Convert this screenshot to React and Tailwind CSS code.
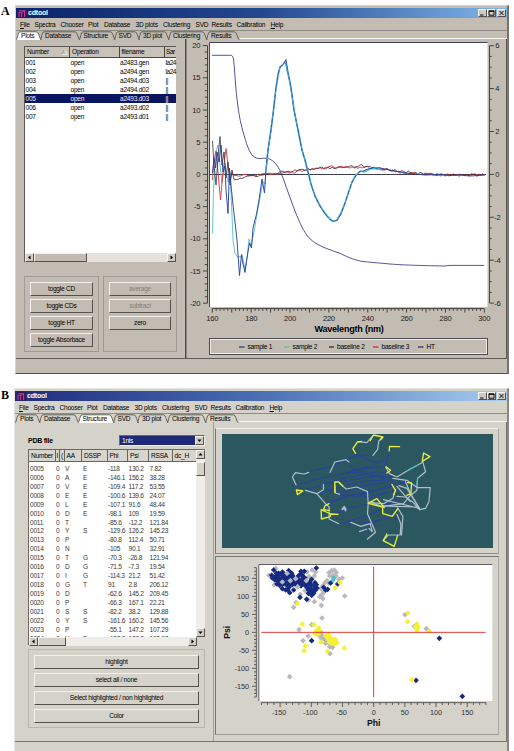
import clsx from 'clsx';

const menus = [
  ['File', 'w-[14.5px]', true],
  ['Spectra', 'w-[26px]'],
  ['Chooser', 'w-[27.5px]'],
  ['Plot', 'w-[16px]'],
  ['Database', 'w-[31.5px]'],
  ['3D plots', 'w-[27.5px]'],
  ['Clustering', 'w-[32.5px]'],
  ['SVD', 'w-[16px]'],
  ['Results', 'w-[25px]'],
  ['Calibration', 'w-[34px]'],
  ['Help', 'w-[14px]', true],
];

const tabs = [
  ['Plots', 24, 'w-[24px]'],
  ['Database', 38.5, 'w-[38.5px]'],
  ['Structure', 35, 'w-[35px]'],
  ['SVD', 24.5, 'w-[24.5px]'],
  ['3D plot', 30, 'w-[30px]'],
  ['Clustering', 38, 'w-[38px]'],
  ['Results', 32, 'w-[32px]'],
];

const files = [
  ['001', 'open', 'a2483.gen', 'la24'],
  ['002', 'open', 'a2494.gen', 'la24'],
  ['003', 'open', 'a2494.d03', '||'],
  ['004', 'open', 'a2494.d02', '||'],
  ['005', 'open', 'a2493.d03', '||'],
  ['006', 'open', 'a2493.d02', '||'],
  ['007', 'open', 'a2493.d01', '||'],
];

const residues = [
  ['0005', 'V', 'E', '-118', '130.2', '7.82'],
  ['0006', 'A', 'E', '-146.1', '156.2', '38.28'],
  ['0007', 'V', 'E', '-109.4', '117.2', '53.55'],
  ['0008', 'E', 'E', '-100.6', '139.6', '24.07'],
  ['0009', 'L', 'E', '-107.1', '91.6', '48.44'],
  ['0010', 'D', 'E', '-98.1', '109', '19.59'],
  ['0011', 'T', '', '-85.6', '-12.2', '121.84'],
  ['0012', 'Y', 'S', '-129.6', '126.2', '145.23'],
  ['0013', 'P', '', '-80.8', '112.4', '50.71'],
  ['0014', 'N', '', '-105', '90.1', '32.91'],
  ['0015', 'T', 'G', '-70.3', '-26.8', '121.94'],
  ['0016', 'D', 'G', '-71.5', '-7.3', '19.54'],
  ['0017', 'I', 'G', '-114.3', '21.2', '51.42'],
  ['0018', 'G', 'T', '91', '2.8', '206.12'],
  ['0019', 'D', '', '-62.6', '145.2', '209.45'],
  ['0020', 'P', '', '-66.3', '167.1', '22.21'],
  ['0021', 'S', 'S', '-82.2', '38.2', '129.88'],
  ['0022', 'Y', 'S', '-161.6', '160.2', '145.56'],
  ['0023', 'P', '', '-55.1', '147.2', '107.29'],
  ['0024', 'V', 'E', '-127.3', '137.8', '102.07'],
];

const range = (from, to, step) => {
  const out = [];
  for (let v = from; v <= to + 1e-6; v += step) out.push(v);
  return out;
};

// small deterministic noise source
const random = (seed) => () => {
  seed = (seed * 16807) % 2147483647;
  return seed / 2147483647;
};

// baseline drawn through anchors with a bit of jitter
function noisy(head, anchors, seed, amp) {
  const rnd = random(seed);
  const pts = head.map((p) => p.join(','));
  for (let i = 0; i < anchors.length - 1; i++) {
    const [x0, y0] = anchors[i];
    const [x1, y1] = anchors[i + 1];
    for (let x = x0; x < x1; x += 2) {
      const y = y0 + ((y1 - y0) * (x - x0)) / (x1 - x0);
      pts.push(`${x},${(y + (rnd() - 0.5) * amp).toFixed(1)}`);
    }
  }
  return pts.join(' ');
}

const black = noisy(
  [[212.5, 141], [214, 165], [216, 185], [218, 158], [220, 136.5], [222, 165], [224, 152], [226, 178], [228, 162], [230, 185], [232, 170]],
  [[234, 181], [240, 178], [262, 174.5], [285, 172], [310, 169], [330, 167.5], [362, 166], [375, 168], [400, 171], [425, 174], [455, 175.5], [485, 175]],
  71, 2.8,
);
const red = noisy(
  [[212.5, 180], [214, 160], [216, 151], [218, 172], [220.5, 200], [223, 172], [226, 148.5], [228, 165], [230, 180], [232, 173]],
  [[234, 177], [240, 176], [262, 174.5], [290, 173], [310, 169], [330, 167], [350, 167], [375, 168], [400, 172], [425, 174.5], [455, 174.5], [485, 175]],
  23, 2.6,
);

const sample1 =
  '212.5,173 214,158 215.5,168 217,152 219,162 221,145 223,172 225,166 226,190 228,213.5 229.5,168 231,185 233,205 235,222 237,240 239.5,275.5 241.5,254.5 243,264 245,272.5 247,258 249.5,243 251.5,248 253,228 256.5,214 259,200 262,179 264.5,193 266,168 268,150 271,130 273.5,110 276,88 278,75 280,67 283,64.5 286,59.5 288,72 291,88 294,110 298,130 302,150 305,160 308,172 311,184 315,196 320,206 325,214 329,218.5 333,221.3 337,220.5 341,214 345,203 348,194 352,182 356,175.5 359,172 363,171 368,169 373,168 380,168 390,170 400,172 410,173.5 425,175 440,174.5 450,175.5 460,175 470,176 485,175';
// sample 2 runs apart from sample 1 only at the short wavelengths
const sample2Head =
  '212.5,233 213.5,190 216,152 218,145 220,165 222,183 225,163 228,182 230,172 232,215 233,240 235,253 237,256.5 241,257 242,255 245,269 247,258 249,239 251,246 254,232 257,214 260,198 263,182 265,184 266.5,166';
const sample2Tail =
  '266.5,166 268,150 271,130 273.5,110 276,88 278,75 280,67 283,64.5 285.5,62 287.5,72 289,78 291,88 294,110 298,130 302,150 305,160 308,172 311,184 315,196 320,206 325,213 329,218 333,221.5 337,220 341,213 345,203 348,194 352,182 356,175 360,171 364,172 370,169 380,168';
const ht =
  'M212 55.3H231.5C233.5 56 234 62 234.5 70C236 92 238 112 241.5 126C245 139 248 150 252 155C255 158 258 158.9 261 158.6C265 157.8 270 158 274 162C280 167 284 181 288 192C293 206 297 217 302 227C306 235 310 240 317 244C324 248 332 250.5 339 253C346 256 352 259.5 362 261.4C374 262.7 382 263.2 390 264C402 265 418 265.5 444 266L450 265.4H484';

const legend = [
  ['sample 1', '#1d2c86', 'w-[45px]'],
  ['sample 2', '#55c2a8', 'w-[44.5px]'],
  ['baseline 2', '#2c1c34', 'w-[44.5px]'],
  ['baseline 3', '#cc2424', 'w-[45px]'],
  ['HT', '#1e2a70', 'w-[20px]'],
];

function Logo() {
  return (
    <svg viewBox="0 0 10 9" className="h-[9px] w-[10px] shrink-0">
      <rect width="9" height="8.5" fill="#3b1450" />
      <path d="M1 8V3.2H3.6V8M3.6 3.2L6.6 1.6V8" fill="none" stroke="#c03f96" strokeWidth="1.1" />
      <path d="M1 1.6H6.6" stroke="#7d3fb4" />
    </svg>
  );
}

function TitleButton({ children }) {
  return (
    <span className="flex h-[8px] w-[9px] items-center justify-center border border-t-[#f4f2ee] border-r-[#56524e] border-b-[#56524e] border-l-[#f4f2ee] bg-[#d0ccc4]">
      <svg viewBox="0 0 7 6" className="h-[6px] w-[7px] shrink-0" fill="none" stroke="#111" strokeWidth="1">
        {children}
      </svg>
    </span>
  );
}

function TitleBar({ className }) {
  return (
    <div className={clsx('flex h-[10px] shrink-0 items-center bg-linear-to-r pr-[1px] pl-[2px]', className)}>
      <Logo />
      <span className="text-[7px] leading-[10px] font-bold tracking-[-0.2px] text-white">cdtool</span>
      <div className="ml-auto flex">
        <TitleButton>
          <path d="M1 5H4.5" />
        </TitleButton>
        <TitleButton>
          <path d="M1 .8H6V5.2H1ZM1 1.4H6" />
        </TitleButton>
        <span className="w-[1.5px]" />
        <TitleButton>
          <path d="M1.5 1L5.5 5M5.5 1L1.5 5" />
        </TitleButton>
      </div>
    </div>
  );
}

function MenuBar() {
  return (
    <div className="flex h-[12px] shrink-0 items-center pl-[4px]">
      {menus.map(([name, width, key]) => (
        <span key={name} className={clsx('shrink-0 whitespace-nowrap', width)}>
          {key ? <u className="underline-offset-1">{name[0]}</u> : name[0]}
          {name.slice(1)}
        </span>
      ))}
    </div>
  );
}

function TabBar({ active }) {
  return (
    <div className="flex h-[9px] shrink-0 border-t border-[#8f8b85]">
      {tabs.map(([name, w, width]) => (
        <div key={name} className={clsx('relative shrink-0', width)}>
          <svg viewBox={`0 0 ${w + 3} 9`} width={w + 3} height="9" className="absolute top-0 left-0">
            <path
              d={`M0 9C1.5 8 1.8 1 3.8 .8H${w - 3.5}C${w - 1} 1 ${w - 0.5} 8 ${w + 1.5} 9`}
              fill={name === active ? '#fff' : 'none'}
              stroke="#55514d"
              strokeWidth=".9"
            />
          </svg>
          <span className="relative block pl-[5px] leading-[9px] whitespace-nowrap">{name}</span>
        </div>
      ))}
      <div className="ml-[2px] flex-1 self-end border-b border-[#f6f4f0]" />
    </div>
  );
}

function Arrow({ d }) {
  return (
    <span className="flex h-[9px] w-[9px] shrink-0 items-center justify-center border border-t-[#f6f4f0] border-r-[#55514d] border-b-[#55514d] border-l-[#f6f4f0] bg-[#d2cec6]">
      <svg viewBox="0 0 5 5" className="h-[5px] w-[5px] shrink-0">
        <path d={d} fill="#000" />
      </svg>
    </span>
  );
}

const LEFT = 'M3.5 .5V4.5L1 2.5Z';
const RIGHT = 'M1.5 .5V4.5L4 2.5Z';
const UP = 'M.5 3.5H4.5L2.5 1Z';
const DOWN = 'M.5 1.5H4.5L2.5 4Z';

function Button({ children, disabled, className }) {
  return (
    <button
      className={clsx(
        'block h-[14px] w-full shrink-0 border border-t-[#f4f2ee] border-r-[#55514d] border-b-[#55514d] border-l-[#f4f2ee] text-center leading-[12px]',
        disabled && 'text-[#857f78]',
        className,
      )}
    >
      {children}
    </button>
  );
}

function FileTable() {
  const cols = ['w-[45px]', 'w-[49.5px]', 'w-[45.5px]', 'w-[11px] tracking-[-0.5px]'];
  return (
    <div className="flex h-[216px] w-[152px] flex-col border-t border-l border-[#5c5854] bg-white">
      <div className="flex h-[11px] shrink-0 bg-[#c9c2b8]">
        {['Number', 'Operation', 'filename', 'Sar'].map((h, i) => (
          <div
            key={h}
            className={clsx(
              'flex shrink-0 items-center border-b border-[#4a4642] leading-[10px] whitespace-nowrap',
              i < 3 ? 'border-r pl-[2px]' : 'pl-[1px]',
              cols[i],
            )}
          >
            {h}
            {i === 0 && (
              <svg viewBox="0 0 7 6" className="ml-auto h-[6px] w-[9px]" fill="none" stroke="#8d8780" strokeWidth=".7">
                <path d="M.5 5.5L3.5 .5" />
                <path d="M3.5 .5L6.5 5.5H.5" stroke="#f4f2ee" />
              </svg>
            )}
          </div>
        ))}
      </div>
      <div className="flex flex-1 flex-col">
        {files.map((row, n) => (
          <div key={row[0]} className={clsx('flex h-[8.95px] leading-[9px]', n === 4 && 'bg-[#0a1560] text-[#e8e8f4]')}>
            {row.map((cell, i) => (
              <span key={i} className={clsx('shrink-0 pl-[0.5px] whitespace-nowrap', cols[i])}>
                {cell}
              </span>
            ))}
          </div>
        ))}
      </div>
      <div className="flex h-[9px] shrink-0 bg-[#e6e3df]">
        <Arrow d={LEFT} />
        <span className="w-[53px] border border-t-[#f4f2ee] border-r-[#55514d] border-b-[#55514d] border-l-[#f4f2ee] bg-[#c4bcb2]" />
        <span className="flex-1" />
        <Arrow d={RIGHT} />
      </div>
    </div>
  );
}

function SpectrumPlot() {
  const yL = (v) => 174.4 - v * 6.44;
  const yR = (v) => 174.4 - v * 21.45;
  const x = (v) => 212.3 + (v - 160) * 1.943;
  return (
    <svg viewBox="189 40 318 296" className="block h-[296px] w-[318px]" fontSize="7.6" fill="#222">
      <rect x="209.5" y="42.5" width="278" height="264.5" fill="#fff" />
      <path d="M209.5 307V42.5H487.5" fill="none" stroke="#45435c" />
      <g stroke="#3a3733" strokeWidth=".9" fill="none">
        <path d="M207.5 45.7V303" />
        {range(-20, 20, 1).map((v) => (
          <path key={v} d={`M${v % 5 ? 204.8 : 203} ${yL(v)}H207.5`} />
        ))}
        <path d="M489.5 45.7V303" />
        {range(-6, 6, 0.5).map((v) => (
          <path key={v} d={`M489.5 ${yR(v)}H${v % 2 ? 491.7 : 494}`} />
        ))}
        <path d="M212.3 308.6H484.3" />
        {range(160, 300, 2).map((v) => (
          <path key={v} d={`M${x(v)} 308.6V${v % 10 ? 310.8 : 312.6}`} />
        ))}
      </g>
      {range(-20, 20, 5).map((v) => (
        <text key={v} x="200.3" y={yL(v) + 2.6} textAnchor="end">
          {v}
        </text>
      ))}
      {range(-6, 6, 2).map((v) => (
        <text key={v} x={v < 0 ? 494.3 : 495.2} y={yR(v) + 2.6}>
          {v}
        </text>
      ))}
      {range(160, 300, 20).map((v) => (
        <text key={v} x={x(v)} y="320.8" textAnchor="middle">
          {v}
        </text>
      ))}
      <text x="349" y="331.8" textAnchor="middle" fontSize="9.1" fontWeight="bold" fill="#000">
        Wavelength (nm)
      </text>
      <g fill="none" strokeLinejoin="round">
        <path d="M210 174.5H486" stroke="#2b2838" strokeWidth=".9" />
        <polyline points={sample2Head} stroke="#55bfc4" strokeWidth=".9" />
        <polyline points={red} stroke="#d8343a" strokeWidth=".9" />
        <polyline points={black} stroke="#3b2f3c" strokeWidth=".8" />
        <path d={ht} stroke="#443f8c" strokeWidth=".9" />
        <polyline points={sample2Tail} stroke="#58bfe0" strokeWidth="1.7" />
        <polyline points={sample1} stroke="#2a4499" strokeWidth=".95" />
        <polyline points={sample2Tail} stroke="#46aed8" strokeWidth="1" strokeDasharray="3 3" />
      </g>
    </svg>
  );
}

function PlotsWindow() {
  return (
    <div className="flex h-[369px] w-[494px] flex-col border-t border-r-2 border-b border-l border-t-[#d6d2cc] border-r-[#77736f] border-b-[#55514d] border-l-[#d6d2cc] bg-[#c3bcb2] pt-[2px]">
      <TitleBar className="from-[#0a246a] via-[#24478f] to-[#82b8ea]" />
      <MenuBar />
      <TabBar active="Plots" />
      <div className="flex h-[320px] shrink-0 border-r border-b border-[#5f5b57]">
        <div className="w-[170px] shrink-0 border-r border-[#4f4b48] pt-[7px] pl-[8px]">
          <FileTable />
          <div className="mt-[14px] flex gap-[4px]">
            <div className="flex h-[76px] w-[75px] flex-col gap-[3px] border border-[#a19b93] px-[5px] pt-[5px]">
              <Button>toggle CD</Button>
              <Button>toggle CDs</Button>
              <Button>toggle HT</Button>
              <Button>toggle Absorbace</Button>
            </div>
            <div className="flex h-[76px] w-[74px] flex-col gap-[3px] border border-[#a19b93] px-[5px] pt-[5px]">
              <Button disabled>average</Button>
              <Button disabled>subtract</Button>
              <Button>zero</Button>
            </div>
          </div>
        </div>
        <div className="flex-1 border-l border-[#8a867f] pt-[1px] pl-[2px]">
          <SpectrumPlot />
          <div className="mt-[2px] ml-[20px] flex h-[17px] w-[279px] items-center border border-[#4e4c58] pl-[29px] shadow-[inset_1px_1px_0_#efece8,inset_-1px_-1px_0_#efece8]">
            {legend.map(([name, color, width]) => (
              <span key={name} className={clsx('flex shrink-0 items-center gap-[3px] whitespace-nowrap', width)}>
                <svg width="5.5" height="2" className="shrink-0">
                  <path d="M0 1H5.5" stroke={color} strokeWidth="1.2" />
                </svg>
                {name}
              </span>
            ))}
          </div>
        </div>
      </div>
    </div>
  );
}

function ResidueTable() {
  const cols = ['w-[26.5px]', 'w-[4.5px]', 'w-[4.5px]', 'w-[17.5px]', 'w-[25.5px]', 'w-[20.5px]', 'w-[21px]', 'w-[23.5px]', 'w-[24px]'];
  const cells = ['w-[26px]', 'w-[9px]', 'w-[18px]', 'w-[25px]', 'w-[20.5px]', 'w-[21px]', 'w-[30px]'];
  return (
    <div className="flex h-[196px] w-[177px] flex-col border-t border-l border-[#6b6864] bg-white">
      <div className="flex h-[187px]">
        <div className="flex w-[168px] flex-col overflow-hidden">
          <div className="flex h-[12px] shrink-0 bg-[#d8d5cd]">
            {['Number', 'I', '(', 'AA', 'DSSP', 'Phi', 'Psi', 'RSSA', 'dc_H'].map((h, i) => (
              <div
                key={h}
                className={clsx(
                  'shrink-0 border-b border-[#66625e] leading-[11px] whitespace-nowrap',
                  i < 8 && 'border-r',
                  i === 1 || i === 2 ? 'pl-[1px]' : 'pl-[2px]',
                  cols[i],
                )}
              >
                {h}
              </div>
            ))}
          </div>
          <div className="pt-[2px] text-[#3a3836]">
            {residues.map(([no, aa, dssp, phi, psi, rssa]) => (
              <div key={no} className="flex h-[8.93px] pl-[1px] leading-[9px]">
                {[no, '0', aa, dssp, phi, psi, rssa].map((cell, i) => (
                  <span key={i} className={clsx('shrink-0 whitespace-nowrap', cells[i])}>
                    {cell}
                  </span>
                ))}
              </div>
            ))}
          </div>
        </div>
        <div className="flex w-[9px] shrink-0 flex-col bg-[#efedea]">
          <Arrow d={UP} />
          <span className="mt-[3px] h-[14px] border border-t-[#f6f4f0] border-r-[#55514d] border-b-[#55514d] border-l-[#f6f4f0] bg-[#d4d1c9]" />
          <span className="flex-1" />
          <Arrow d={DOWN} />
        </div>
      </div>
      <div className="flex h-[9px] shrink-0 bg-[#efedea]">
        <Arrow d={LEFT} />
        <span className="w-[28px] border border-t-[#f6f4f0] border-r-[#55514d] border-b-[#55514d] border-l-[#f6f4f0] bg-[#d4d1c9]" />
        <span className="flex-1" />
        <Arrow d={RIGHT} />
        <span className="w-[8px] bg-[#d4d1c9]" />
      </div>
    </div>
  );
}

function Molecule() {
  return (
    <svg viewBox="36 163 812 342" className="block h-[114px] w-[271px] bg-[#2b5761]" preserveAspectRatio="none" fill="none" strokeLinejoin="round" strokeLinecap="round">
      <g stroke="#2b419f" strokeWidth="3.2">
        <path d="M292 278L362 262L408 240L440 225L484 228" />
        <path d="M258 316L330 296L400 282L470 262L524 262" />
        <path d="M286 332L350 312L430 300L500 288L545 292" />
        <path d="M340 312L420 292L500 276L530 280" />
        <path d="M322 342L390 322L470 304L556 300" />
        <path d="M350 374L400 352L470 336L540 322L548 300" />
        <path d="M372 404L420 384L480 372L500 350L556 330" />
        <path d="M386 432L430 420L500 396L520 380L566 356" />
        <path d="M384 344L440 350L500 330L556 312L600 306" />
        <path d="M408 240L430 272L500 262M440 225L500 250L524 240" />
        <path d="M538 214L526 262M420 434L480 428L540 412L560 420" />
        <path d="M360 366L430 344L470 352L530 340M450 458L476 446L500 420" />
        <path d="M400 282L450 276L524 296M350 330L400 338L470 316L520 310" />
      </g>
      <g stroke="#b0bfcc" strokeWidth="3.6">
        <path d="M258 316L247 292L256 279L282 283L296 278" />
        <path d="M360 278L374 247L408 240L416 247" />
        <path d="M444 186L470 189L488 168M518 174L506 184L502 210L488 227" />
        <path d="M286 332L320 342L340 330V314M320 342L346 372L357 382V418L386 432" />
        <path d="M374 318L376 340L388 344M388 311L408 328L440 322L472 336L474 372L472 402L496 458L472 478" />
        <path d="M526 262L538 282L560 292L600 268L638 248L646 276L622 296L620 332L600 348L580 372L520 380" />
        <path d="M548 296L590 302L622 324H660L656 366L646 386L628 390L606 366L586 352L560 350" />
        <path d="M566 318L590 326L628 386L560 370L520 360M480 368L510 378L556 380L622 382" />
        <path d="M560 320L600 366M556 330L548 356L520 372L476 368M586 306L600 340L628 390" />
        <path d="M560 404L572 432L570 466H534L520 482M562 384L578 410L574 466" />
        <path d="M422 428L452 440L480 432L486 456L476 446" />
        <path d="M396 390L402 380L408 390L396 386M402 380L406 394" />
        <path d="M448 456L470 448" />
      </g>
      <path d="M592 273L622 257M622 296L620 314" stroke="#49b9c3" strokeWidth="3.6" />
      <g stroke="#e9ee3c" strokeWidth="4">
        <path d="M436 221L428 207L442 187M442 187L454 185M480 183L490 166L518 172L510 180" />
        <path d="M568 201L538 200L537 214M528 262L541 272L530 280" />
        <path d="M636 245L640 220L659 231L636 245" />
        <path d="M278 334L262 345L259 331L278 334" />
        <path d="M374 338V307H386L398 319" />
        <path d="M358 392L340 390L345 378L357 372M333 390L334 418L360 411L362 403L333 390M362 403L384 404" />
        <path d="M474 371L500 357L522 384L474 371M517 386L518 402L546 410L562 388" />
        <path d="M545 314L556 332L550 346M592 309L604 310L602 342L590 347" />
        <path d="M530 463L519 483L552 500L562 468" />
      </g>
    </svg>
  );
}

// marker positions on the phi/psi map
const greyDots = [
  [196, 55], [176, 76], [188, 84], [192, 104], [205, 76], [215, 90], [225, 104], [240, 84], [232, 70], [248, 98], [258, 84], [270, 76], [282, 92], [296, 80], [312, 78], [316, 66], [305, 60], [290, 66], [262, 110],
  [356, 68], [364, 62], [372, 60], [378, 68], [358, 78], [368, 76], [377, 78], [386, 88], [396, 84], [350, 92], [344, 98], [356, 100], [337, 108], [332, 116], [340, 126], [336, 132], [403, 138], [284, 122], [270, 133],
  [328, 140], [338, 146], [294, 150], [312, 155], [257, 158], [250, 172], [333, 166], [335, 204], [304, 224], [266, 239], [293, 258], [278, 272], [333, 248], [326, 256], [336, 258], [342, 268], [334, 266], [350, 274], [346, 280], [356, 280], [358, 290], [367, 292], [359, 311], [238, 380],
  [584, 194], [612, 229], [648, 236],
];
const blueDots = [
  [190, 60], [186, 84], [184, 76], [198, 70], [208, 72], [216, 66], [219, 78], [202, 84], [212, 86], [204, 94], [200, 102], [208, 106], [216, 116], [226, 96], [222, 86], [235, 62], [232, 76], [236, 88], [230, 106], [236, 112], [246, 76], [244, 90], [240, 100], [250, 120], [238, 128], [226, 120], [252, 84], [258, 94], [256, 104], [264, 88], [266, 100], [272, 64], [282, 64], [276, 76], [270, 72], [284, 84], [274, 90], [278, 98], [272, 108], [284, 106], [290, 112], [294, 120], [298, 96], [302, 104], [304, 88], [300, 114], [304, 124], [310, 130], [304, 136], [314, 98], [312, 108], [318, 104], [320, 114], [316, 120], [318, 54], [269, 142], [289, 148], [294, 130], [340, 112], [346, 120], [352, 118], [361, 99], [382, 102], [304, 272], [687, 265], [617, 391], [756, 439],
  [196, 78], [194, 90], [204, 70], [210, 98], [224, 74], [228, 84], [218, 102], [234, 98], [240, 80], [246, 104], [250, 96], [262, 80], [260, 102], [268, 96], [278, 84], [286, 96], [292, 104], [244, 70], [232, 118], [206, 86], [298, 124], [310, 118],
];
const yellowDots = [
  [389, 98], [374, 114], [262, 160], [276, 222], [311, 224], [326, 234], [318, 242], [326, 244], [314, 252], [324, 252], [354, 254], [346, 258], [332, 276], [354, 268], [362, 264], [356, 276], [366, 272], [374, 268], [364, 280], [372, 282], [380, 278], [285, 287], [281, 302], [351, 304], [402, 294],
  [593, 189], [592, 215], [620, 222], [616, 230], [624, 232], [620, 241], [657, 243], [605, 389],
];

function Dots({ points, color }) {
  return <path d={points.map(([x, y]) => `M${x - 8.5} ${y}l8.5-8.5l8.5 8.5l-8.5 8.5z`).join('')} fill={color} />;
}

function Ramachandran() {
  const px = (v) => 490 + v * 1.871;
  const py = (v) => 247 - v * 1.078;
  return (
    <svg viewBox="20 30 840 516" className="block h-[172px] w-[280px]" fontSize="22" fill="#333">
      <rect x="145" y="43" width="701" height="410" fill="#fff" />
      <path d="M145.5 453V43.5H846" fill="none" stroke="#5f5d66" strokeWidth="3" />
      <g stroke="#4c4a46" strokeWidth="2.6" fill="none">
        <path d="M138 53V441M153 458H827" />
        {range(-180, 180, 10).map((v) => (
          <g key={v}>
            <path d={`M${v % 50 ? 131 : 125} ${py(v)}H138`} />
            <path d={`M${px(v)} 458V${v % 50 ? 465 : 471}`} />
          </g>
        ))}
      </g>
      {range(-150, 150, 50).map((v) => (
        <g key={v}>
          <text x="116" y={py(v) + 8} textAnchor="end">
            {v}
          </text>
          <text x={px(v) - (v < 0 ? 3 : 0)} y="495" textAnchor="middle">
            {v}
          </text>
        </g>
      ))}
      <g fontSize="26" fontWeight="bold" fill="#111" textAnchor="middle">
        <text x="490" y="529">
          Phi
        </text>
        <text transform="translate(59 247) rotate(-90)">Psi</text>
      </g>
      <Dots points={greyDots} color="#b9b9bd" />
      <Dots points={blueDots} color="#152a80" />
      <Dots points={[[240, 92], [256, 86], [216, 96], [262, 110], [288, 92], [230, 70]]} color="#b4b6c2" />
      <Dots points={[[370, 84], [368, 90]]} color="#58bcc4" />
      <Dots points={yellowDots} color="#f6f032" />
      <path d="M490 51V441M153 247H826" stroke="#e23a34" strokeWidth="3" />
    </svg>
  );
}

function StructureWindow() {
  return (
    <div className="flex h-[380px] w-[495px] flex-col border-t border-r-2 border-l border-t-[#e6e3de] border-r-[#8a8783] border-l-[#e6e3de] bg-[#d5d2ca] pt-[2px]">
      <TitleBar className="from-[#1f2d7c] via-[#4a6fb5] to-[#a6cef0]" />
      <MenuBar />
      <TabBar active="Structure" />
      <div className="flex h-[320px] shrink-0 border-r border-b border-[#77746f]">
        <div className="w-[199px] shrink-0 border-r border-[#a09d97] pt-[13px] pl-[13px]">
          <div className="flex h-[10px] items-center">
            <span className="w-[91px] text-[7px] font-bold">PDB file</span>
            <div className="flex h-[11px] w-[86px] border border-t-[#6b6864] border-r-[#f4f2ee] border-b-[#f4f2ee] border-l-[#6b6864] bg-white">
              <span className="flex-1 bg-[#202878] pl-[2px] leading-[9px] text-white">1nls</span>
              <Arrow d={DOWN} />
            </div>
          </div>
          <div className="pt-[4px]">
            <ResidueTable />
          </div>
          <div className="mt-[4px] flex h-[79px] w-[177px] flex-col gap-[4px] border border-[#b9b6af] px-[5px] pt-[5px]">
            <Button>highlight</Button>
            <Button>select all / none</Button>
            <Button>Select highlighted / non highlighted</Button>
            <Button>Color</Button>
          </div>
        </div>
        <div className="flex flex-1 flex-col pt-[6px] pl-[1px]">
          <div className="h-[126px] w-[284px] border-t border-r border-b border-l border-t-[#f2f0ec] border-r-[#aaa7a1] border-b-[#8f8c87] border-l-[#77746f] pt-[5px] pl-[6px]">
            <Molecule />
          </div>
          <div className="mt-[2px] h-[179px] w-[284px] border border-t-[#77746f] border-r-[#aaa7a1] border-b-[#9d9a94] border-l-[#77746f] pt-[3px] pl-[1px]">
            <Ramachandran />
          </div>
        </div>
      </div>
    </div>
  );
}

function Figure({ letter, className, children }) {
  return (
    <div className={clsx('flex', className)}>
      <span className="shrink-0 pl-[1px] font-['Liberation_Serif',serif] text-[12px] leading-[12px] font-bold tracking-normal">{letter}</span>
      <div className="ml-auto">{children}</div>
    </div>
  );
}

export default function App() {
  return (
    <div className="h-[751px] w-[514px] overflow-hidden bg-white font-['Liberation_Sans',Arial,sans-serif] text-[6.6px] leading-[9px] tracking-[-0.25px] text-black">
      <Figure letter="A" className="h-[388px] pt-[5px] pr-[5px]">
        <PlotsWindow />
      </Figure>
      <Figure letter="B" className="h-[363px] overflow-hidden pt-[1px] pr-[5px]">
        <div className="-mt-[1px]">
          <StructureWindow />
        </div>
      </Figure>
    </div>
  );
}
